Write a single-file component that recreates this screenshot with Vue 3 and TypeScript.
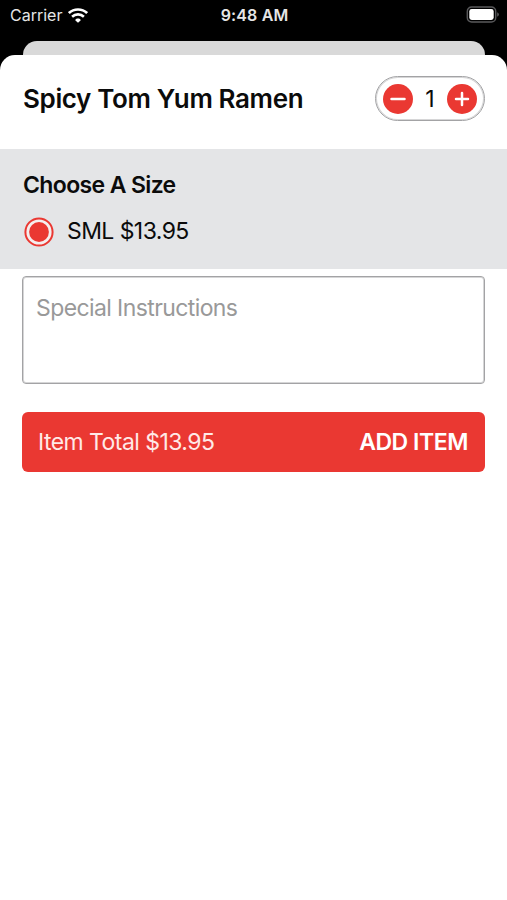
<script setup lang="ts">
import { computed, ref } from 'vue'

interface SizeOption {
  label: string
  price: number
}

const sizes: SizeOption[] = [{ label: 'SML', price: 13.95 }]
const selected = ref(0)
const quantity = ref(1)
const instructions = ref('')
const total = computed(() => (sizes[selected.value].price * quantity.value).toFixed(2))

function decrease() {
  if (quantity.value > 1) quantity.value--
}
</script>

<template>
  <div class="screen">
    <header class="status">
      <div class="carrier">
        <span>Carrier</span>
        <svg class="wifi" width="20" height="15" viewBox="0 0 20 15" fill="none" stroke="#fff">
          <path d="M.9 5.1C6 .3 14 .3 19.1 5.1" stroke-width="2.7" />
          <path d="M4.1 8.7C7.4 5.6 12.6 5.6 15.9 8.7" stroke-width="2.6" />
          <path d="M10 14.7L7.4 12.4C7 10 13 10 12.6 12.4Z" fill="#fff" stroke="none" />
        </svg>
      </div>
      <span class="clock">9:48 AM</span>
      <svg class="battery" width="34" height="18" viewBox="0 0 34 18">
        <rect x="1.3" y="1" width="28.4" height="15" rx="4.3" fill="none" stroke="#59595b" stroke-width="1.4" />
        <rect x="3.3" y="3" width="24.4" height="11" rx="2.4" fill="#fff" />
        <path d="M31.2 6.2Q32.9 7 32.9 8.5T31.2 10.8Z" fill="#59595b" />
      </svg>
    </header>
    <div class="back-card"></div>
    <main class="sheet">
      <div class="title-row">
        <h1>Spicy Tom Yum Ramen</h1>
        <div class="stepper">
          <button class="round" aria-label="Decrease" @click="decrease">
            <svg width="30" height="30" viewBox="0 0 30 30"><path d="M8.5 15H21.5" stroke="#fff" stroke-width="2.5" stroke-linecap="round" /></svg>
          </button>
          <span class="qty">{{ quantity }}</span>
          <button class="round" aria-label="Increase" @click="quantity++">
            <svg width="30" height="30" viewBox="0 0 30 30"><path d="M9 15H21M15 9V21" stroke="#fff" stroke-width="2.5" stroke-linecap="round" /></svg>
          </button>
        </div>
      </div>
      <section class="sizes">
        <h2>Choose A Size</h2>
        <div v-for="(size, i) in sizes" :key="size.label" class="option" @click="selected = i">
          <svg width="30" height="30" viewBox="0 0 30 30">
            <circle cx="15" cy="15" r="13.6" fill="#f5eeee" stroke="#ea3832" stroke-width="2" />
            <circle v-if="selected === i" cx="15" cy="15" r="9.9" fill="#ea3832" />
          </svg>
          <span class="option-text">{{ size.label }} ${{ size.price.toFixed(2) }}</span>
        </div>
      </section>
      <textarea v-model="instructions" class="notes" placeholder="Special Instructions"></textarea>
      <button class="add">
        <span class="total">Item Total ${{ total }}</span>
        <span class="action">ADD ITEM</span>
      </button>
    </main>
  </div>
</template>

<style>
body {
  margin: 0;
  background: #000;
}
</style>

<style scoped>
.screen {
  display: flex;
  flex-direction: column;
  width: 507px;
  height: 900px;
  overflow: hidden;
  background: #000;
  color: #0b0b0b;
  font-family: Inter, "Liberation Sans", sans-serif;
}
.status {
  display: grid;
  grid-template-columns: 1fr auto 1fr;
  align-items: center;
  height: 30px;
  margin-bottom: 11px;
  padding: 0 7px 0 10px;
  color: #e6e6e6;
  font-size: 16px;
}
.carrier {
  display: flex;
  align-items: center;
  gap: 6px;
}
.clock {
  margin-right: 1px;
  font-weight: 600;
  letter-spacing: 0.15px;
}
.battery {
  justify-self: end;
}
.back-card {
  flex: none;
  height: 14px;
  margin: 0 22px 0 23px;
  border-radius: 14px 14px 0 0;
  background: #d9d9d9;
}
.sheet {
  display: flex;
  flex: 1;
  flex-direction: column;
  border-radius: 15px 15px 0 0;
  background: #fff;
}
.title-row {
  display: flex;
  align-items: center;
  justify-content: space-between;
  height: 87px;
  margin-bottom: 7px;
  padding: 0 22px 0 23px;
}
h1,
h2 {
  margin: 0;
  font-weight: 600;
}
h1 {
  font-size: 26px;
  line-height: 32px;
  letter-spacing: -0.37px;
}
.stepper {
  box-sizing: border-box;
  display: flex;
  align-items: center;
  justify-content: space-between;
  width: 110px;
  height: 45px;
  padding: 0 7px;
  border: 1px solid #a3a3a5;
  border-radius: 23px;
  box-shadow: inset 0 0 0 1px #d6d6d7;
}
.round {
  width: 30px;
  height: 30px;
  padding: 0;
  border: 0;
  border-radius: 50%;
  background: #ea3832;
}
.round svg {
  display: block;
}
.qty {
  font-size: 23px;
}
.sizes {
  box-sizing: border-box;
  height: 120px;
  padding: 21px 24px 0 23px;
  background: #e4e5e7;
}
h2 {
  font-size: 23px;
  line-height: 30px;
  letter-spacing: -0.63px;
}
.option {
  display: flex;
  align-items: center;
  gap: 13px;
  margin: 17px 0 0 1px;
}
.option-text {
  margin: -1px 0 1px;
  font-size: 23px;
  line-height: 30px;
  letter-spacing: -0.58px;
}
.notes {
  box-sizing: border-box;
  display: block;
  height: 108px;
  margin: 7px 22px 0 22px;
  padding: 16px 13px;
  border: 1px solid #a3a3a5;
  border-radius: 4px;
  outline: 0;
  box-shadow: inset 0 0 0 1px #d6d6d7;
  background: #fff;
  color: #0b0b0b;
  font: 23px/30px Inter, sans-serif;
  letter-spacing: -0.6px;
  resize: none;
}
.notes::placeholder {
  color: #999;
  opacity: 1;
}
.add {
  display: flex;
  align-items: center;
  justify-content: space-between;
  height: 60px;
  margin: 28px 22px 0;
  padding: 0 17px 0 16px;
  border: 0;
  border-radius: 6px;
  background: #ea3832;
  color: #fff;
  font: 23px/30px Inter, sans-serif;
}
.total {
  color: #ffe9e7;
  letter-spacing: -0.55px;
}
.action {
  font-weight: 600;
  letter-spacing: -0.45px;
}
</style>
